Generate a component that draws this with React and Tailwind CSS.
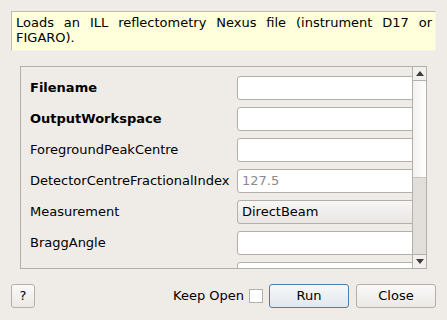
import React from 'react';

const rows = [
  { label: 'Filename', bold: true },
  { label: 'OutputWorkspace', bold: true },
  { label: 'ForegroundPeakCentre' },
  { label: 'DetectorCentreFractionalIndex', placeholder: '127.5' },
  { label: 'Measurement', combo: 'DirectBeam' },
  { label: 'BraggAngle' },
  { label: '' },
];

const Field = ({ row }) => {
  if (row.combo) {
    return (
      <div className="h-[24px] w-[190px] rounded-[3px] border border-[#b3afab] bg-gradient-to-b from-[#f8f7f6] to-[#e9e6e3] pl-[4px] flex items-center text-[13px] text-black">
        {row.combo}
      </div>
    );
  }
  return (
    <div className="h-[24px] w-[190px] rounded-[3px] border border-[#b3afab] bg-white pl-[4px] flex items-center text-[13px] text-[#8a8a8a]">
      {row.placeholder}
    </div>
  );
};

const App = () => {
  return (
    <div
      className="w-[447px] h-[320px] bg-[#efebe7] relative overflow-hidden text-black"
      style={{ fontFamily: '"DejaVu Sans", sans-serif' }}
    >
      {/* description */}
      <div className="absolute left-[11px] top-[11px] w-[425px] h-[40px] bg-[#ffffdc] border-l border-t border-[#bdbab6] border-r border-r-[#f4f2ef] border-b border-b-[#f4f2ef] pl-[4px] pr-[3px] pt-[3px] text-[13px] leading-[15px] text-justify">
        Loads an ILL reflectometry Nexus file (instrument D17 or FIGARO).
      </div>

      {/* properties panel */}
      <div className="absolute left-[20px] top-[66px] w-[407px] h-[203px] border border-[#b3afab] flex">
        <div className="flex-1 overflow-hidden pt-[9px] pl-[9px]">
          <div className="grid grid-cols-[207px_1fr] gap-y-[7px]">
            {rows.map((row, i) => (
              <React.Fragment key={i}>
                <div className={`h-[24px] flex items-center text-[13px] whitespace-nowrap ${row.bold ? 'font-bold' : ''}`}>
                  {row.label}
                </div>
                <Field row={row} />
              </React.Fragment>
            ))}
          </div>
        </div>
        <div className="w-[14px] border-l border-[#b3afab] flex flex-col bg-[#e2dfdb]">
          <div className="h-[14px] border-b border-[#b3afab] bg-[#f2f0ee] flex items-center justify-center">
            <svg width="8" height="5" viewBox="0 0 8 5"><path d="M4 0L8 5H0z" fill="#3c3c3c" /></svg>
          </div>
          <div className="h-[97px] bg-gradient-to-r from-[#f3f1ef] to-[#ffffff] border-b border-[#c8c5c1]" />
          <div className="flex-1" />
          <div className="h-[14px] border-t border-[#b3afab] bg-[#f2f0ee] flex items-center justify-center">
            <svg width="8" height="5" viewBox="0 0 8 5"><path d="M0 0H8L4 5z" fill="#3c3c3c" /></svg>
          </div>
        </div>
      </div>

      {/* buttons */}
      <div className="absolute left-[11px] top-[284px] w-[425px] h-[24px] flex items-center">
        <button className="w-[24px] h-[24px] rounded-[3px] border border-[#b3afab] bg-gradient-to-b from-[#fbfaf9] to-[#ebe8e5] text-[13px] flex items-center justify-center">
          ?
        </button>
        <div className="flex-1" />
        <span className="text-[13px]">Keep Open</span>
        <div className="ml-[5px] w-[14px] h-[14px] border border-[#b3afab] bg-white" />
        <button className="ml-[6px] w-[80px] h-[24px] rounded-[3px] border border-[#4a7fb5] bg-gradient-to-b from-[#f6f8fa] to-[#e3e7ec] text-[13px]">
          Run
        </button>
        <button className="ml-[7px] w-[80px] h-[24px] rounded-[3px] border border-[#b3afab] bg-gradient-to-b from-[#fbfaf9] to-[#ebe8e5] text-[13px]">
          Close
        </button>
      </div>
    </div>
  );
};

export default App;
